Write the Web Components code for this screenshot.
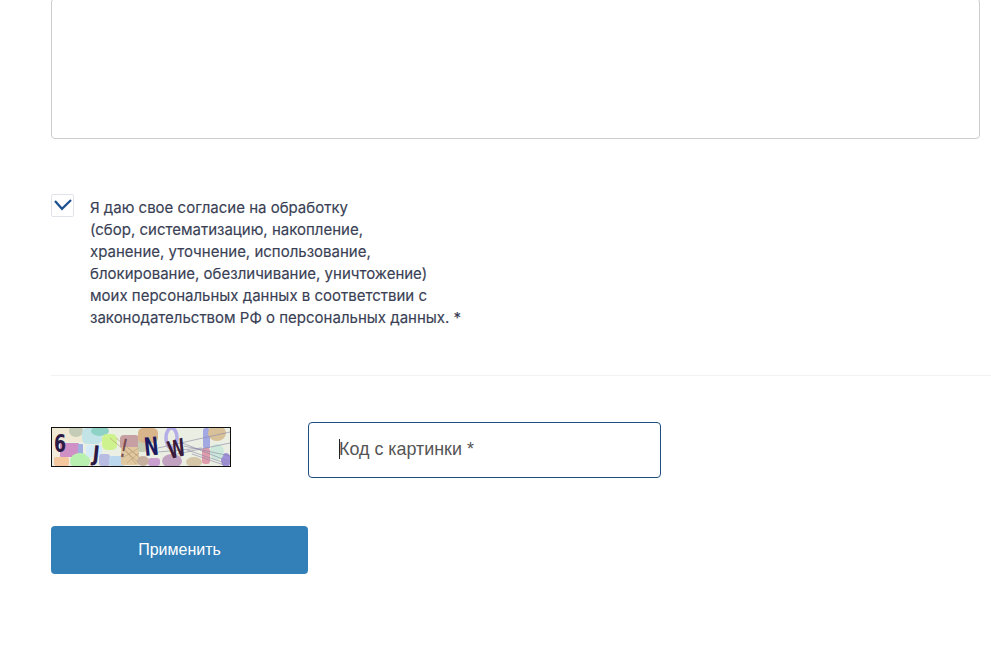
<!DOCTYPE html>
<html lang="ru"><head><meta charset="utf-8"><title>Форма</title>
<style>html,body{margin:0;padding:0;background:#fff;overflow:hidden}body{width:991px;height:650px}</style>
</head><body>
<feedback-form></feedback-form>
<script>
function def(name, html){
  customElements.define(name, class extends HTMLElement{
    constructor(){super();this.attachShadow({mode:'open'}).innerHTML=html;}
  });
}
def('text-area-box',`<style>:host{display:block;box-sizing:border-box;width:929px;height:141px;margin-top:-2px;border:1px solid #ccc;border-radius:4px;background:#fff}</style>`);
def('consent-check',`<style>
:host{display:flex;align-items:flex-start;gap:16px;font:400 15px/22px Inter,"Noto Sans",sans-serif;color:#3a3f55;-webkit-text-stroke:.15px #3a3f55}
.box{box-sizing:border-box;flex:none;width:23px;height:23px;border:1px solid #e0e3ea;border-radius:2px;display:flex;align-items:center;justify-content:center;background:#fff}
.txt{padding-top:3px;white-space:nowrap;margin-left:0}
</style>
<div class="box"><svg width="21" height="21" viewBox="0 0 21 21"><path d="M3 6 10 13.800 19 5" fill="none" stroke="#1c4f8f" stroke-width="2.200"/></svg></div>
<div class="txt"><slot></slot></div>`);
def('captcha-image',`<style>:host{display:block;box-sizing:border-box;width:180px;height:40px;border:1px solid #111;overflow:hidden}
svg{display:block}text{font-family:"DejaVu Sans Condensed","DejaVu Sans",sans-serif;font-weight:700;fill:#2b1a45}</style>
<svg width="178" height="38" viewBox="0 0 178 38">
<rect width="178" height="38" fill="#ebeee2"/>
<g>
<rect x="0" y="0" width="30" height="14" fill="#efe8d2"/>
<rect x="0" y="12" width="10" height="18" fill="#f3ecdc"/>
<ellipse cx="24" cy="3" rx="7" ry="6" fill="#c4ccb8"/>
<rect x="8" y="15" width="19" height="14" rx="1" fill="#cf90c6"/>
<rect x="26" y="16" width="5" height="12" rx="1" fill="#9fb0e0"/>
<rect x="2" y="29" width="15" height="9" rx="2" fill="#f4c79e"/>
<ellipse cx="28" cy="33" rx="10" ry="8" fill="#b8f0b0"/>
<rect x="30" y="0" width="20" height="16" rx="5" fill="#c2e4e6"/>
<ellipse cx="48" cy="3" rx="9" ry="5" fill="#8ed2c6"/>
<rect x="50" y="6" width="15" height="16" rx="5" fill="#cdf28e"/>
<rect x="34" y="17" width="16" height="12" rx="3" fill="#d5ebf6"/>
<rect x="47" y="26" width="11" height="12" rx="3" fill="#b8bce2"/>
<rect x="57" y="28" width="16" height="10" rx="3" fill="#bcd8ee"/>
<rect x="68" y="7" width="19" height="14" rx="4" fill="#c6a0a2"/>
<rect x="69" y="19" width="18" height="18" rx="2" fill="#e0c9a0"/>
<rect x="86" y="8" width="8" height="16" rx="2" fill="#c4ccb4"/>
<rect x="86" y="0" width="20" height="15" rx="5" fill="#d9b58c"/>
<rect x="96" y="30" width="12" height="8" rx="3" fill="#cb9ed0"/>
<ellipse cx="91" cy="33" rx="6" ry="5" fill="#c8b0a0"/>
<ellipse cx="119.500" cy="10" rx="5.500" ry="10" fill="none" stroke="#b4aee8" stroke-width="3.500"/>
<ellipse cx="120" cy="33" rx="10" ry="7" fill="#c0a2c0"/>
<ellipse cx="142" cy="34" rx="8" ry="5" fill="#d6c6a8"/>
<rect x="151" y="0" width="7" height="21" rx="3" fill="#a2a8e2"/>
<rect x="150" y="20" width="8" height="16" rx="3" fill="#e09caa"/>
<ellipse cx="165" cy="5" rx="9" ry="8" fill="#d8c098"/>
<ellipse cx="174" cy="32" rx="5" ry="7" fill="#a090d8"/>
<ellipse cx="165" cy="24" rx="7" ry="8" fill="#cce8da"/>
</g>
<g stroke="#8a86a8" stroke-width=".6" fill="none">
<path d="M106 20 178 4M106 24 150 20M128 14 178 34M132 18 178 28M135 22 176 36M140 26 172 37M125 26 178 15"/>
</g>
<path d="M58 10 86 34M64 10 88 30M72 20 84 36M76 20 86 28M70 30 87 20M75 35 87 25" stroke="#b89870" stroke-width=".6"/>
<text transform="translate(2 24) scale(.8 1)" style="font-size:24px">6</text>
<text transform="translate(40 33) rotate(6) scale(1 1.1)" style="font-size:20px">J</text>
<text transform="translate(66 28) rotate(12) scale(1 1.1)" style="font-size:23px;font-weight:400;fill:#7a4a50">!</text>
<text transform="translate(93 28) rotate(-6) scale(.8 1.05)" style="font-size:24px;fill:#1b1a60">N</text>
<text transform="translate(118 31) rotate(-14) scale(.8 1.1)" style="font-size:22px;fill:#3a1a3a">W</text>
</svg>`);
def('code-input',`<style>
:host{display:flex;align-items:center;box-sizing:border-box;width:353px;height:56px;border:1px solid #1c4f7f;border-radius:4px;padding:0 0 2px 30px;font:400 17.9px "Liberation Sans",Arial,sans-serif;color:#555;background:#fff}
.caret{width:1px;height:20px;background:#222;margin-right:-1px}
</style><span class="caret"></span><span><slot></slot></span>`);
def('submit-button',`<style>
:host{display:flex;align-items:center;justify-content:center;box-sizing:border-box;width:257px;height:48px;border-radius:4px;background:#337fb7;color:#fff;font:400 16px "Liberation Sans",Arial,sans-serif}
</style><slot></slot>`);
def('feedback-form',`<style>
:host{display:block;padding-left:51px}
.consent{margin-top:55px}
.rule{height:1px;background:#f0f2f3;margin-top:46px}
.captcha{display:flex;align-items:flex-start;gap:77px;margin-top:46px}
captcha-image{margin-top:5px}
.submit{margin-top:48px}
</style>
<text-area-box></text-area-box>
<div class="consent"><consent-check>Я даю свое согласие на обработку<br>(сбор, систематизацию, накопление,<br>хранение, уточнение, использование,<br>блокирование, обезличивание, уничтожение)<br>моих персональных данных в соответствии с<br>законодательством РФ о персональных данных. *</consent-check></div>
<div class="rule"></div>
<div class="captcha"><captcha-image></captcha-image><code-input>Код с картинки *</code-input></div>
<div class="submit"><submit-button>Применить</submit-button></div>`);
</script>
</body></html>
